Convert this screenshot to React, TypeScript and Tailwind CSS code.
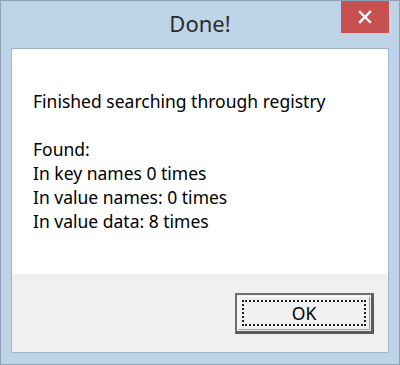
import React from 'react';

const lines = [
  'Finished searching through registry',
  '',
  'Found:',
  'In key names 0 times',
  'In value names: 0 times',
  'In value data: 8 times',
];

function CloseIcon() {
  return (
    <svg width="14" height="14" viewBox="0 0 14 14">
      <path d="M2 2 L12 12 M12 2 L2 12" stroke="#ffffff" strokeWidth="2.4" strokeLinecap="square" />
    </svg>
  );
}

export default function App() {
  return (
    <div
      className="w-[400px] h-[365px] bg-[#bfd4e8] border border-[#8ea3ba] flex flex-col"
      style={{ fontFamily: '"Noto Sans", "Open Sans", sans-serif' }}
    >
      {/* title bar */}
      <div className="relative h-[47px] shrink-0 flex items-center justify-center">
        <span className="text-[22px] text-[#2b2b2b] -mt-[2px]">Done!</span>
        <button className="absolute right-[10px] top-0 w-[48px] h-[32px] bg-[#c75050] flex items-center justify-center">
          <CloseIcon />
        </button>
      </div>

      {/* client area */}
      <div className="mx-[10px] mb-[11px] flex-1 flex flex-col border border-[#9fb4c9]">
        <div className="h-[225px] bg-white pt-[40px] pl-[21px] text-[17.5px] leading-[24px] text-black">
          {lines.map((line, i) => (
            <div key={i} className="h-[24px]">
              {line}
            </div>
          ))}
        </div>
        <div className="flex-1 bg-[#f0f0f0] flex justify-end items-start pt-[19px] pr-[14px]">
          <button className="w-[139px] h-[41px] border-2 border-[#6f6f6f] border-b-[3px] border-r-[3px] border-b-[#5a5a5a] border-r-[#5a5a5a] bg-[#f0f0f0] p-[1px]">
            <div className="w-full h-full border-t border-l border-white border-b border-r border-b-[#a0a0a0] border-r-[#a0a0a0] p-[3px]">
              <div className="w-full h-full border-2 border-dotted border-[#222] flex items-center justify-center text-[17.5px] text-black">
                OK
              </div>
            </div>
          </button>
        </div>
      </div>
    </div>
  );
}
